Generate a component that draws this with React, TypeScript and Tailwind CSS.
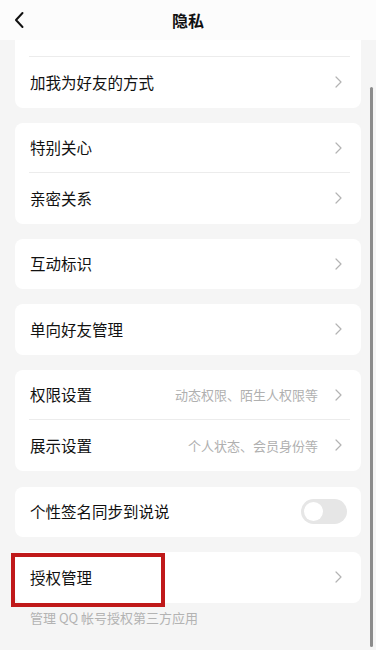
import React from 'react';

const font = { fontFamily: '"Noto Sans CJK SC", "Noto Sans", sans-serif' };

function Chevron() {
  return (
    <svg width="7" height="12" viewBox="0 0 7 12" className="shrink-0">
      <path d="M1 1l5 5-5 5" fill="none" stroke="#b3b3b3" strokeWidth="1.2" strokeLinecap="round" strokeLinejoin="round" />
    </svg>
  );
}

function Row({ label, hint, divider }: { label: string; hint?: string; divider?: boolean }) {
  return (
    <div className="relative flex h-[50.5px] items-center pl-[15px] pr-[19px]">
      <span className="flex-1 text-[15.5px] text-[#111]">{label}</span>
      {hint && <span className="mr-[17px] text-[13px] text-[#b0b0b0]">{hint}</span>}
      <Chevron />
      {divider && <div className="absolute bottom-0 left-[14px] right-[11px] h-px bg-[#ececec]" />}
    </div>
  );
}

function Card({ children }: { children: React.ReactNode }) {
  return <div className="mx-[15px] overflow-hidden rounded-lg bg-white">{children}</div>;
}

export default function App() {
  return (
    <div className="relative h-[650px] w-[376px] overflow-hidden bg-[#f5f5f5]" style={font}>
      <div className="relative z-10 flex h-[40px] items-center justify-center bg-[#fcfcfc]">
        <svg width="12" height="18" viewBox="0 0 12 18" className="absolute left-[13px] top-[11px]">
          <path d="M9.5 2L3 9l6.5 7" fill="none" stroke="#111" strokeWidth="2" strokeLinecap="round" strokeLinejoin="round" />
        </svg>
        <span className="text-[16px] font-semibold text-[#111]">隐私</span>
      </div>

      <div className="flex flex-col gap-[15px]">
        <div className="mx-[15px] overflow-hidden rounded-b-lg bg-white">
          <div className="relative h-[17px]">
            <div className="absolute bottom-0 left-[14px] right-[11px] h-px bg-[#ececec]" />
          </div>
          <Row label="加我为好友的方式" />
        </div>
        <Card>
          <Row label="特别关心" divider />
          <Row label="亲密关系" />
        </Card>
        <Card>
          <Row label="互动标识" />
        </Card>
        <Card>
          <Row label="单向好友管理" />
        </Card>
        <Card>
          <Row label="权限设置" hint="动态权限、陌生人权限等" divider />
          <Row label="展示设置" hint="个人状态、会员身份等" />
        </Card>
        <div className="mt-px">
          <Card>
            <div className="flex h-[50.5px] items-center pl-[15px] pr-[14px]">
              <span className="flex-1 text-[15.5px] text-[#111]">个性签名同步到说说</span>
              <div className="flex h-[25px] w-[46px] items-center rounded-full bg-[#e6e6e6] px-[3px]">
                <div className="h-[19px] w-[19px] rounded-full bg-white" />
              </div>
            </div>
          </Card>
        </div>
        <div>
          <Card>
            <Row label="授权管理" />
          </Card>
          <p className="mt-[5px] px-[30px] text-[13px] text-[#b3b3b3]">管理 QQ 帐号授权第三方应用</p>
        </div>
      </div>

      <div className="absolute left-[11px] top-[553px] h-[54px] w-[154px] border-4 border-[#c0191a]" />
      <div className="absolute left-[370px] top-[87px] h-[560px] w-[3px] rounded-full bg-[#8c8c8c]" />
    </div>
  );
}
